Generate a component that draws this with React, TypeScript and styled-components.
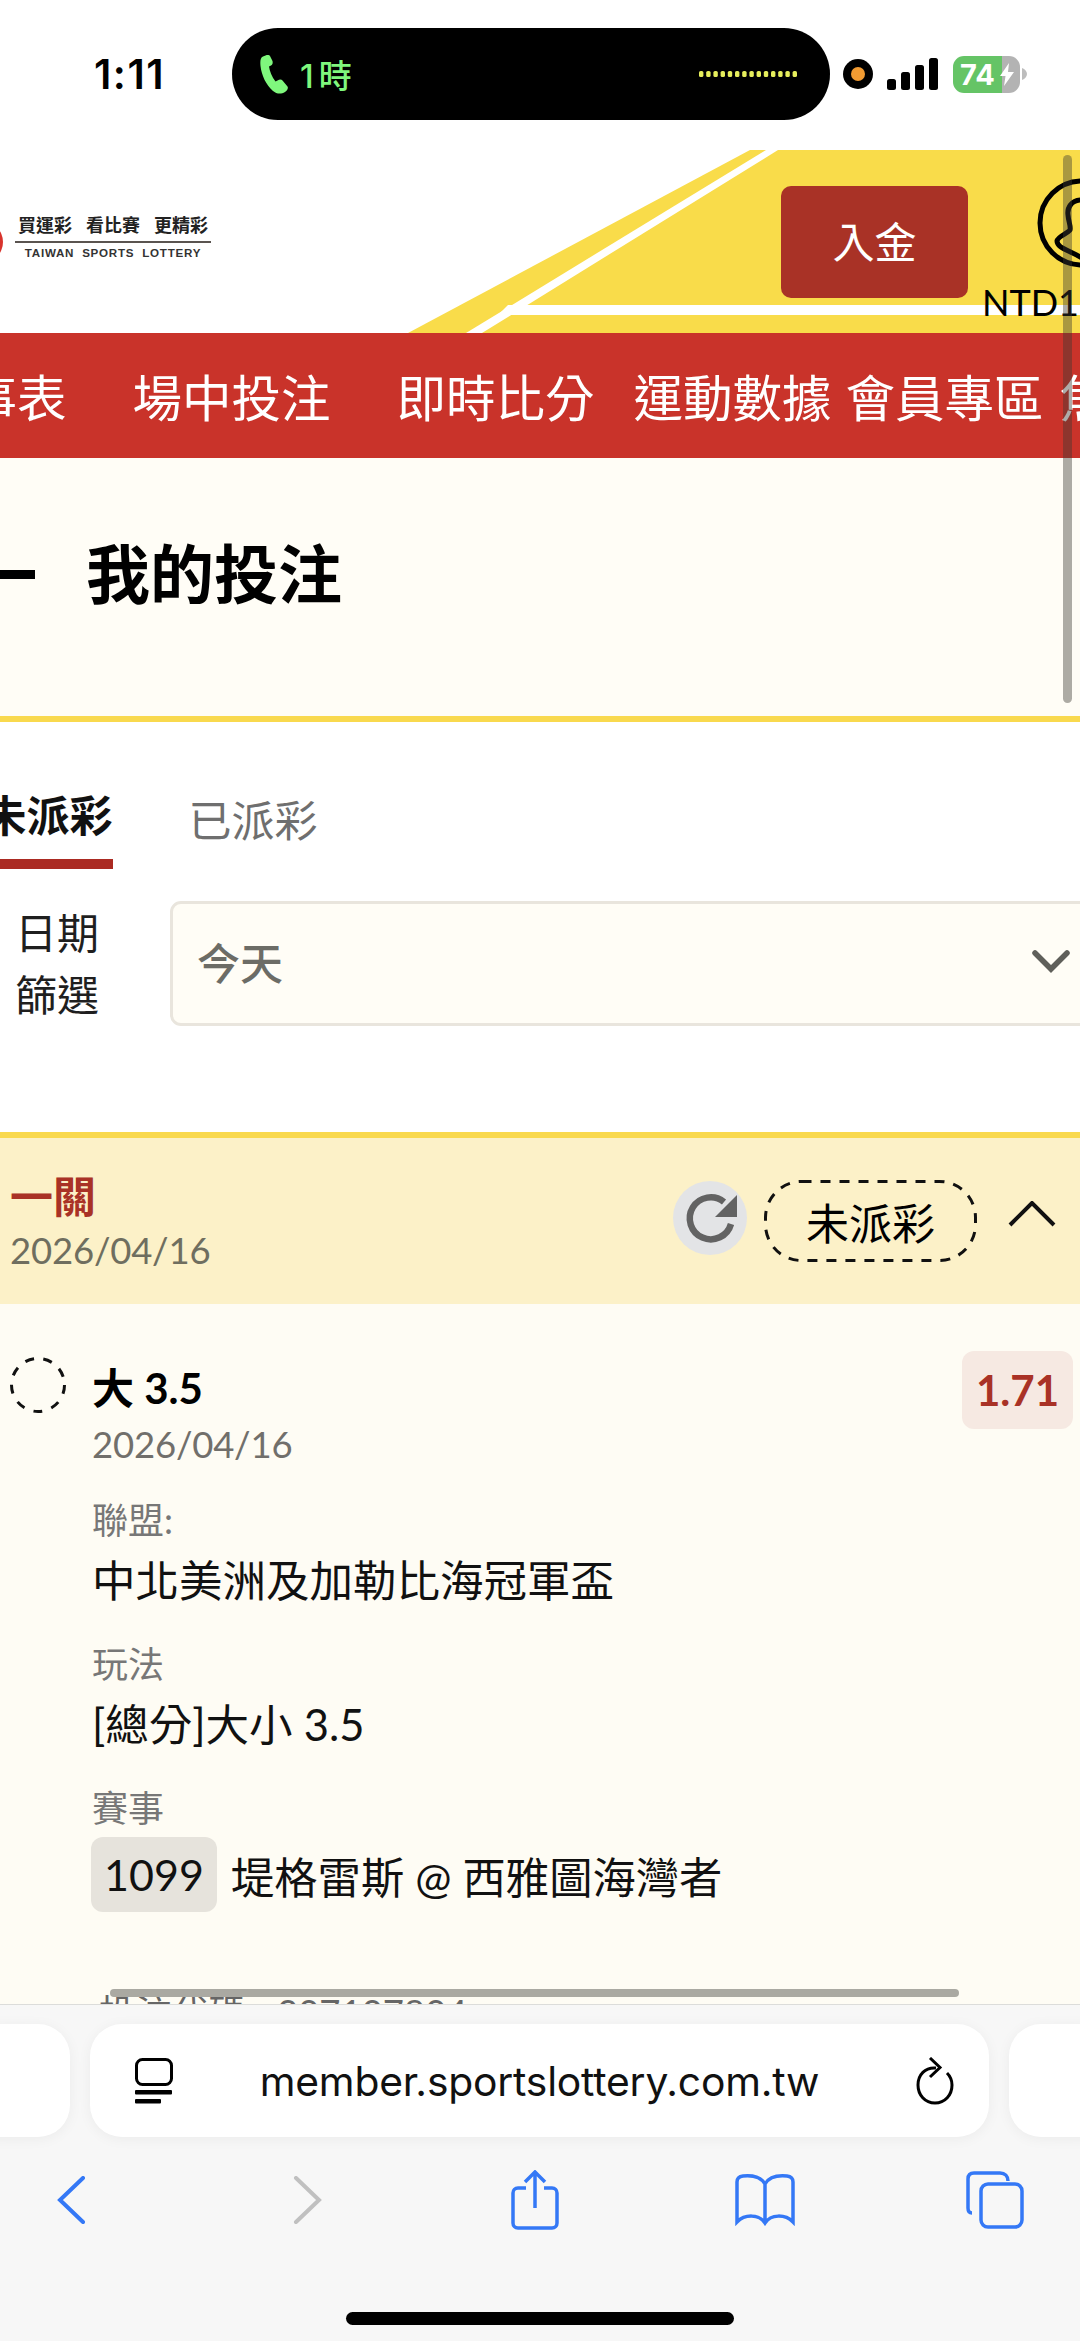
import React from "react";
import styled, { createGlobalStyle } from "styled-components";

const Global = createGlobalStyle`
  html, body { margin: 0; padding: 0; background: #fff; }
  * { box-sizing: border-box; }
`;

const Screen = styled.div`
  position: relative;
  width: 1080px;
  height: 2341px;
  overflow: hidden;
  display: flex;
  flex-direction: column;
  background: #fff;
  font-family: Lato, "Noto Sans CJK TC", sans-serif;
  color: #000;
`;

/* status bar */
const StatusBar = styled.div`
  height: 150px;
  flex: none;
  display: flex;
  align-items: center;
  padding: 0 53px 2px 94px;
  font-family: Inter, "Noto Sans CJK TC", sans-serif;
`;
const Clock = styled.div`
  width: 138px;
  font-size: 41px;
  font-weight: 600;
  letter-spacing: 1.5px;
`;
const Island = styled.div`
  width: 598px;
  height: 92px;
  border-radius: 46px;
  background: #000;
  display: flex;
  align-items: center;
  padding: 0 33px 0 28px;
  color: #7ff77d;
`;
const CallTime = styled.div`
  font-size: 33px;
  font-weight: 500;
  letter-spacing: 5px;
  margin-left: 10px;
  flex: 1;
`;
const StatusIcons = styled.div`
  display: flex;
  align-items: center;
  gap: 14px;
  margin-left: 13px;
`;
const Battery = styled.div`
  position: relative;
  width: 67px;
  height: 37px;
  border-radius: 11px;
  overflow: hidden;
  background: linear-gradient(to right, #65c466 0 49px, #b3b3b3 49px);
  color: #fff;
  font-size: 29px;
  font-weight: 700;
  line-height: 37px;
  padding-left: 7px;
`;
const Bolt = styled.svg`
  position: absolute;
  left: 47px;
  top: 7px;
`;
const BatteryRow = styled.div`
  display: flex;
  align-items: center;
  gap: 2px;
  margin-left: 1px;
`;

/* site header */
const SiteHeader = styled.header`
  position: relative;
  height: 183px;
  flex: none;
  display: flex;
  justify-content: space-between;
  overflow: hidden;
`;
const HeaderArt = styled.svg`
  position: absolute;
  inset: 0;
`;
const Logo = styled.div`
  position: relative;
  margin: 63px 0 0 15px;
  width: 196px;
`;
const LogoMark = styled.div`
  position: absolute;
  left: -54px;
  top: 8px;
  width: 42px;
  height: 42px;
  border-radius: 50%;
  background: #d8332c;
`;
const Slogan = styled.div`
  display: flex;
  justify-content: space-between;
  padding: 0 3px;
  font-size: 18px;
  line-height: 24px;
  font-weight: 700;
  color: #222;
`;
const LogoRule = styled.div`
  height: 1.5px;
  background: #5a5450;
  margin-top: 4px;
`;
const LogoEn = styled.div`
  font-family: "Liberation Sans", sans-serif;
  font-size: 11.6px;
  font-weight: 700;
  line-height: 20px;
  letter-spacing: 0.75px;
  text-align: center;
  color: #333;
  white-space: pre;
`;
const Account = styled.div`
  position: relative;
  display: flex;
  padding-top: 36px;
`;
const Deposit = styled.div`
  width: 187px;
  height: 112px;
  border-radius: 10px;
  background: #a93226;
  color: #fff;
  font-size: 42px;
  padding-bottom: 6px;
  display: flex;
  align-items: center;
  justify-content: center;
`;
const User = styled.div`
  width: 98px;
  display: flex;
  flex-direction: column;
  margin-left: 14px;
  margin-top: -8px;
  white-space: nowrap;
`;
const Avatar = styled.svg`
  display: block;
  margin-left: 55px;
  flex: none;
`;
const Balance = styled.div`
  font-size: 36px;
  line-height: 40px;
  margin-top: 14px;
`;

/* nav */
const Nav = styled.nav`
  height: 125px;
  flex: none;
  background: #c9332a;
  color: #fff;
  display: flex;
  align-items: center;
  margin-left: -82px;
  width: 1300px;
  font-size: 49.5px;
  white-space: nowrap;
`;
const NavItem = styled.div<{ $gap: number }>`
  margin-right: ${(p) => p.$gap}px;
`;

/* page */
const WebContent = styled.main`
  flex: 1;
  min-height: 0;
  overflow: hidden;
`;
const PageTitleBar = styled.div`
  height: 264px;
  background: #fffdf6;
  border-bottom: 6px solid #f9d94e;
  display: flex;
  align-items: center;
  gap: 51px;
  padding-bottom: 26px;
`;
const TitleDash = styled.div`
  width: 35px;
  height: 9px;
  background: #000;
`;
const PageTitle = styled.h1`
  margin: 0;
  font-size: 64px;
  font-weight: 700;
  line-height: 80px;
`;
const Tabs = styled.div`
  display: flex;
  margin: 66px 0 0 -17px;
  gap: 75px;
  height: 81px;
`;
const Tab = styled.div<{ $active?: boolean }>`
  width: 130px;
  height: 81px;
  font-size: 43px;
  line-height: 56px;
  text-align: center;
  white-space: nowrap;
  font-weight: ${(p) => (p.$active ? 700 : 400)};
  color: ${(p) => (p.$active ? "#111" : "#6f6f6f")};
  border-bottom: ${(p) => (p.$active ? "10px solid #ab2a22" : "none")};
  padding-top: ${(p) => (p.$active ? "0" : "5px")};
`;
const FilterRow = styled.div`
  display: flex;
  align-items: center;
  margin: 32px -30px 0 0;
  padding-left: 15px;
  gap: 71px;
`;
const FilterLabel = styled.div`
  width: 84px;
  font-size: 42px;
  line-height: 62px;
  color: #1f1f1f;
`;
const Select = styled.div`
  flex: 1;
  height: 125px;
  background: #fffdf6;
  border: 3px solid #e9e5dd;
  border-radius: 11px;
  display: flex;
  align-items: center;
  justify-content: space-between;
  padding: 0 37px 5px 24px;
  font-size: 43px;
  font-weight: 500;
  color: #6c6c66;
`;
const Section = styled.section`
  margin-top: 106px;
  background: #fefcf4;
  height: 900px;
`;
const SectionHead = styled.div`
  height: 172px;
  background: #fcf1c8;
  border-top: 6px solid #f9d94e;
  display: flex;
  justify-content: space-between;
  padding: 33px 24px 0 10px;
`;
const HeadTitle = styled.div`
  font-size: 43px;
  font-weight: 700;
  line-height: 52px;
  color: #a93226;
`;
const DateText = styled.div`
  font-size: 36.500px;
  letter-spacing: -0.2px;
`;
const HeadDate = styled(DateText)`
  line-height: 48px;
  margin-top: 3px;
  color: #6f6e5f;
`;
const HeadActions = styled.div`
  display: flex;
  align-items: flex-start;
  margin-top: 10px;
`;
const RefreshCircle = styled.div`
  width: 74px;
  height: 74px;
  border-radius: 50%;
  background: #e3e4e6;
  display: flex;
  align-items: center;
  justify-content: center;
`;
const Pill = styled.div`
  position: relative;
  width: 213px;
  height: 82px;
  margin: -1px 31px 0 17px;
  font-size: 43px;
  display: flex;
  align-items: center;
  justify-content: center;
`;
const DashOutline = styled.svg`
  position: absolute;
  inset: 0;
`;
const Caret = styled.svg`
  margin-top: 20px;
`;
const Bet = styled.div`
  display: flex;
  align-items: flex-start;
  padding: 47px 7px 0 10px;
`;
const StatusRing = styled.svg`
  flex: none;
  margin-top: 6px;
`;
const BetBody = styled.div`
  flex: 1;
  margin-left: 26px;
  padding-top: 14px;
`;
const BetName = styled.div`
  font-size: 42px;
  font-weight: 700;
  line-height: 46px;
`;
const BetDate = styled(DateText)`
  line-height: 44px;
  margin-top: 11px;
  color: #716f6b;
`;
const Field = styled.div`
  margin-top: 32px;
  &:first-of-type {
    margin-top: 28px;
  }
`;
const FieldLabel = styled.div`
  font-size: 36px;
  line-height: 44px;
  color: #777;
`;
const FieldValue = styled.div`
  font-size: 43.500px;
  line-height: 60px;
  margin-top: 8px;
  color: #111;
`;
const MatchRow = styled.div`
  display: flex;
  align-items: center;
  gap: 14px;
  margin-top: 7px;
  font-size: 43.300px;
  color: #111;
`;
const MatchChip = styled.div`
  width: 126px;
  height: 75px;
  margin-left: -1px;
  border-radius: 12px;
  background: #e6e3dc;
  font-size: 43px;
  display: flex;
  align-items: center;
  justify-content: center;
`;
const CodeRow = styled.div`
  margin: 78px 0 0 7px;
  display: flex;
  gap: 32px;
  font-size: 36.500px;
  line-height: 44px;
  color: #666;
`;
const Odds = styled.div`
  flex: none;
  width: 111px;
  height: 78px;
  border-radius: 12px;
  background: #f6e9e2;
  color: #a93226;
  font-size: 42px;
  font-weight: 700;
  display: flex;
  align-items: center;
  justify-content: center;
`;
const VScroll = styled.div`
  position: absolute;
  left: 1063px;
  top: 155px;
  width: 9px;
  height: 548px;
  border-radius: 5px;
  background: rgba(60, 58, 50, 0.42);
`;
const HScroll = styled.div`
  position: absolute;
  left: 110px;
  top: 1989px;
  width: 849px;
  height: 8px;
  border-radius: 4px;
  background: #aaa9a2;
`;

/* safari */
const Toolbar = styled.footer`
  height: 337px;
  flex: none;
  background: #f7f7f7;
  border-top: 1px solid #dcdcda;
  display: flex;
  flex-direction: column;
`;
const UrlRow = styled.div`
  display: flex;
  gap: 20px;
  margin: 19px 0 0 -40px;
  width: 1200px;
`;
const UrlStub = styled.div`
  width: 110px;
  height: 113px;
  background: #fff;
  border-radius: 32px;
  box-shadow: 0 2px 14px rgba(0, 0, 0, 0.05);
`;
const UrlBar = styled(UrlStub)`
  width: 899px;
  display: flex;
  align-items: center;
  padding: 0 35px 0 45px;
  justify-content: space-between;
`;
const UrlText = styled.div`
  font-family: Inter, sans-serif;
  font-size: 40.800px;
  letter-spacing: -0.2px;
  margin-right: 10px;
  color: #111;
`;
const BottomIcons = styled.div`
  display: flex;
  align-items: center;
  padding-left: 56px;
  margin-top: 32px;
  height: 62px;
`;
const BarIcon = styled.svg<{ $ml?: number }>`
  flex: none;
  margin-left: ${(p) => p.$ml ?? 0}px;
`;
const HomeBar = styled.div`
  width: 388px;
  height: 13px;
  border-radius: 7px;
  background: #000;
  margin: 81px auto 0;
`;

const Dots = () => (
  <svg width="98" height="6" viewBox="0 0 98 6">
    {Array.from({ length: 14 }, (_, i) => (
      <rect key={i} x={i * 7.2} y="0" width="4.4" height="6" rx="1.6" fill="#e6ee5c" />
    ))}
  </svg>
);

export default function App() {
  return (
    <Screen>
      <Global />
      <StatusBar>
        <Clock>1:11</Clock>
        <Island>
          <svg width="30" height="40" viewBox="0 0 30 40">
            <path
              d="M3 2.5 C0.5 3.5 0 7 0.5 12 C1.5 21 6 31 13 37 C16.5 40 21 40.5 25 38 C27.5 36.5 28.5 34 27.5 32.5 L22.5 26.5 C21.5 25.3 19.5 25.3 17.5 26.5 L15.5 27.5 C12 23 9.5 17 9 12.5 L11 11.5 C12.5 10.5 13 9 12.5 7 L10 2 C9 0.3 6 0.8 3 2.5 Z"
              fill="#7ff77d"
            />
          </svg>
          <CallTime>1時</CallTime>
          <Dots />
        </Island>
        <StatusIcons>
          <svg width="30" height="30" viewBox="0 0 30 30">
            <circle cx="15" cy="15" r="15" fill="#000" />
            <circle cx="15" cy="15" r="7" fill="#f29b32" />
          </svg>
          <svg width="51" height="32" viewBox="0 0 51 32">
            <rect x="0" y="21" width="9" height="11" rx="2.5" />
            <rect x="14" y="14" width="9" height="18" rx="2.5" />
            <rect x="28" y="7" width="9" height="25" rx="2.5" />
            <rect x="42" y="0" width="9" height="32" rx="2.5" />
          </svg>
          <BatteryRow>
            <Battery>
              74
              <Bolt width="14" height="23" viewBox="0 0 14 23">
                <path d="M9 0 L0 13 H5.500 L4 23 L14 9 H8 Z" fill="#fff" />
              </Bolt>
            </Battery>
            <svg width="5" height="12" viewBox="0 0 5 12">
              <path d="M0 0 C3 1 5 3.5 5 6 C5 8.5 3 11 0 12 Z" fill="#bdbdbd" />
            </svg>
          </BatteryRow>
        </StatusIcons>
      </StatusBar>

      <SiteHeader>
        <HeaderArt width="1080" height="183" viewBox="0 0 1080 183">
          <polygon points="750,0 1080,0 1080,183 408,183" fill="#f9dc4a" />
          <polygon points="766,0 778,0 482,183 466,183" fill="#fff" />
          <polygon points="508,155 1080,155 1080,165 498,165" fill="#fff" />
        </HeaderArt>
        <Logo>
          <LogoMark />
          <Slogan>
            <span>買運彩</span>
            <span>看比賽</span>
            <span>更精彩</span>
          </Slogan>
          <LogoRule />
          <LogoEn>{"TAIWAN  SPORTS  LOTTERY"}</LogoEn>
        </Logo>
        <Account>
          <Deposit>入金</Deposit>
          <User>
            <Avatar width="90" height="90" viewBox="0 0 90 90">
              <circle cx="45" cy="45" r="42" fill="none" stroke="#000" strokeWidth="5" />
              <path
                d="M45 22 C34 22 30 30 31 37 C31.500 44 34 48 33 52 C30 56 21 58 20 63 C20 70 32 72 45 80"
                fill="none"
                stroke="#000"
                strokeWidth="5"
              />
            </Avatar>
            <Balance>NTD1</Balance>
          </User>
        </Account>
      </SiteHeader>

      <Nav>
        <NavItem $gap={66}>賽事表</NavItem>
        <NavItem $gap={66}>場中投注</NavItem>
        <NavItem $gap={39}>即時比分</NavItem>
        <NavItem $gap={14}>運動數據</NavItem>
        <NavItem $gap={16}>會員專區</NavItem>
        <NavItem $gap={0}>焦點</NavItem>
      </Nav>

      <WebContent>
        <PageTitleBar>
          <TitleDash />
          <PageTitle>我的投注</PageTitle>
        </PageTitleBar>
        <Tabs>
          <Tab $active>未派彩</Tab>
          <Tab>已派彩</Tab>
        </Tabs>
        <FilterRow>
          <FilterLabel>日期篩選</FilterLabel>
          <Select>
            今天
            <svg width="38" height="24" viewBox="0 0 38 24">
              <path d="M3 4 L19 20 L35 4" fill="none" stroke="#5f5f5a" strokeWidth="5.500" strokeLinecap="round" />
            </svg>
          </Select>
        </FilterRow>
        <Section>
          <SectionHead>
            <div>
              <HeadTitle>一關</HeadTitle>
              <HeadDate>2026/04/16</HeadDate>
            </div>
            <HeadActions>
              <RefreshCircle>
                <svg width="56" height="56" viewBox="0 0 56 56">
                  <path d="M42 12 A21 21 0 1 0 49 34" fill="none" stroke="#636363" strokeWidth="6.500" />
                  <path d="M55 5 V27 H33 Z" fill="#636363" />
                </svg>
              </RefreshCircle>
              <Pill>
                <DashOutline width="213" height="82" viewBox="0 0 213 82">
                  <rect x="1.500" y="1.500" width="210" height="79" rx="36" fill="none" stroke="#111" strokeWidth="3" strokeDasharray="10 9" />
                </DashOutline>
                未派彩
              </Pill>
              <Caret width="48" height="26" viewBox="0 0 48 26">
                <path d="M2 24 L24 2 L46 24" fill="none" stroke="#111" strokeWidth="4" />
              </Caret>
            </HeadActions>
          </SectionHead>
          <Bet>
            <StatusRing width="56" height="56" viewBox="0 0 56 56">
              <circle cx="28" cy="28" r="26.500" fill="none" stroke="#111" strokeWidth="3" strokeDasharray="9 9.500" />
            </StatusRing>
            <BetBody>
              <BetName>大 3.5</BetName>
              <BetDate>2026/04/16</BetDate>
              <Field>
                <FieldLabel>聯盟:</FieldLabel>
                <FieldValue>中北美洲及加勒比海冠軍盃</FieldValue>
              </Field>
              <Field>
                <FieldLabel>玩法</FieldLabel>
                <FieldValue>[總分]大小 3.5</FieldValue>
              </Field>
              <Field>
                <FieldLabel>賽事</FieldLabel>
                <MatchRow>
                  <MatchChip>1099</MatchChip>
                  堤格雷斯 @ 西雅圖海灣者
                </MatchRow>
              </Field>
              <CodeRow>
                <span>投注代碼</span>
                <span>307107804</span>
              </CodeRow>
            </BetBody>
            <Odds>1.71</Odds>
          </Bet>
        </Section>
      </WebContent>

      <Toolbar>
        <UrlRow>
          <UrlStub />
          <UrlBar>
            <svg width="38" height="46" viewBox="0 0 38 46">
              <rect x="1.500" y="1.500" width="35" height="25" rx="6" fill="none" stroke="#000" strokeWidth="3" />
              <rect x="0" y="32" width="37" height="4.500" rx="1" />
              <rect x="0" y="41" width="26" height="4.500" rx="1" />
            </svg>
            <UrlText>member.sportslottery.com.tw</UrlText>
            <svg width="38" height="48" viewBox="0 0 38 48">
              <path d="M20 11 C9 10 2 18 2 28 C2 38 9 46 19 46 C29 46 36 38 36 28 C36 23 34 19 31 16" fill="none" stroke="#000" strokeWidth="3" />
              <path d="M14 1 L24 10.500 L14 20" fill="none" stroke="#000" strokeWidth="3" />
            </svg>
          </UrlBar>
          <UrlStub />
        </UrlRow>
        <BottomIcons>
          <BarIcon width="30" height="48" viewBox="0 0 30 48">
            <path d="M27 2 L4 24 L27 46" fill="none" stroke="#3478f6" strokeWidth="4" strokeLinecap="round" />
          </BarIcon>
          <BarIcon $ml={207} width="30" height="48" viewBox="0 0 30 48">
            <path d="M3 2 L26 24 L3 46" fill="none" stroke="#c0c0c0" strokeWidth="4" strokeLinecap="round" />
          </BarIcon>
          <BarIcon $ml={188} width="48" height="60" viewBox="0 0 48 60">
            <path d="M15 18 H7 C4 18 2 20 2 23 V53 C2 56 4 58 7 58 H41 C44 58 46 56 46 53 V23 C46 20 44 18 41 18 H33" fill="none" stroke="#3478f6" strokeWidth="3.500" />
            <path d="M24 38 V2 M14 12 L24 2 L34 12" fill="none" stroke="#3478f6" strokeWidth="3.500" />
          </BarIcon>
          <BarIcon $ml={176} width="60" height="52" viewBox="0 0 60 52">
            <path d="M30 10 C26 3 18 1 8 2 C4 2.500 2 4 2 8 V48 C10 40 24 40 30 49 C36 40 50 40 58 48 V8 C58 4 56 2.500 52 2 C42 1 34 3 30 10 Z M30 10 V48" fill="none" stroke="#3478f6" strokeWidth="3.500" />
          </BarIcon>
          <BarIcon $ml={171} width="58" height="58" viewBox="0 0 58 58">
            <path d="M6 42 C3 42 2 40 2 37 V8 C2 4 4 2 8 2 H34 C39 2 42 5 42 10" fill="none" stroke="#3478f6" strokeWidth="3.500" />
            <rect x="15" y="13" width="41" height="43" rx="7" fill="none" stroke="#3478f6" strokeWidth="3.500" />
          </BarIcon>
        </BottomIcons>
        <HomeBar />
      </Toolbar>

      <VScroll />
      <HScroll />
    </Screen>
  );
}
